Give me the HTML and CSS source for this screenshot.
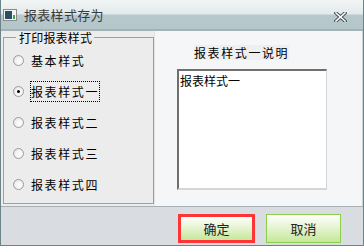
FILE: index.html
```html
<!DOCTYPE html>
<html>
<head>
    <meta charset="utf-8">
    <title>报表样式存为</title>
    <link rel="stylesheet" href="styles.css">
</head>
<body>
    <div class="window">
        <div class="titlebar">
            <svg class="appicon" width="14" height="12" viewBox="0 0 14 12">
                <rect x="0.5" y="0.5" width="13" height="11" fill="#f4f4f4" stroke="#8a8a8a"/>
                <rect x="2" y="2" width="7" height="8" fill="#2c4f63"/>
                <rect x="10" y="6" width="2" height="4" fill="#3aa35a"/>
            </svg>
            <span class="title">报表样式存为</span>
            <svg class="close" width="13" height="10" viewBox="0 0 13 10">
                <path d="M2 1 L11 9 M11 1 L2 9" stroke="#3d4a4e" stroke-width="3.4" stroke-linecap="square"/>
                <path d="M2 1 L11 9 M11 1 L2 9" stroke="#ffffff" stroke-width="1.6" stroke-linecap="square"/>
            </svg>
        </div>
        <div class="main">
            <div class="left">
                <fieldset class="group">
                    <legend>打印报表样式</legend>
                    <div class="opt"><span class="radio"></span><span class="label">基本样式</span></div>
                    <div class="opt"><span class="radio on"></span><span class="label focus">报表样式一</span></div>
                    <div class="opt"><span class="radio"></span><span class="label">报表样式二</span></div>
                    <div class="opt"><span class="radio"></span><span class="label">报表样式三</span></div>
                    <div class="opt"><span class="radio"></span><span class="label">报表样式四</span></div>
                </fieldset>
            </div>
            <div class="right">
                <div class="desc-title">报表样式一说明</div>
                <div class="desc-box">报表样式一</div>
            </div>
        </div>
        <div class="footer">
            <div class="btn hl">确定</div>
            <div class="btn">取消</div>
        </div>
    </div>
</body>
</html>
```

FILE: styles.css
```css
body {
    margin: 0;
    padding: 0;
    font-family: "Noto Sans CJK SC", "DejaVu Sans", sans-serif;
    font-size: 12px;
    color: #000;
}

.window {
    display: flex;
    flex-direction: column;
    width: 364px;
    height: 246px;
    box-sizing: border-box;
    border-left: 1px solid #6c8388;
    border-right: 1px solid #6c8388;
    border-bottom: 1px solid #6c8388;
    background-color: #d9dde1;
}

.titlebar {
    display: flex;
    align-items: center;
    height: 29px;
    flex-shrink: 0;
    padding: 0 0 0 2px;
    border-bottom: 2px solid #a4b2b5;
    background: linear-gradient(#f3f6f6 0, #e2e9ea 14px, #b7c8cc 15px, #b5c6ca 29px);
}

.appicon {
    margin-top: 1px;
}

.title {
    margin-left: 7px;
    font-size: 13px;
    color: #3a3a3a;
    letter-spacing: 0.3px;
}

.close {
    margin-left: auto;
    margin-right: 16px;
    margin-top: 5px;
}

.main {
    display: flex;
    height: 175px;
    flex-shrink: 0;
    border-bottom: 1px solid #a9b0b5;
}

.left {
    width: 153px;
    padding: 0 0 2px 2px;
    box-sizing: border-box;
    background-color: #ececec;
    display: flex;
}

.group {
    flex: 1;
    margin: 0;
    padding: 1px 0 0 9px;
    border: 1px solid #a0a0a0;
    border-right-color: #9a9a9a;
}

.group legend {
    padding: 0 2px 0 3px;
    margin-left: 3px;
    font-size: 12px;
    line-height: 13px;
    letter-spacing: 0.2px;
}

.opt {
    display: flex;
    align-items: center;
    height: 31px;
}

.radio {
    width: 9px;
    height: 9px;
    border-radius: 50%;
    border: 1px solid #9c9c9c;
    background: radial-gradient(circle at 60% 60%, #ffffff 0, #f2f2f2 50%, #d6d6d6 100%);
    position: relative;
}

.radio.on::after {
    content: "";
    position: absolute;
    left: 3px;
    top: 3px;
    width: 3px;
    height: 3px;
    background-color: #000;
    border-radius: 50%;
}

.label {
    margin-left: 6px;
    padding: 1px 0;
    letter-spacing: 1.6px;
    border: 1px solid transparent;
}

.label.focus {
    border: 1px dotted #000;
}

.right {
    flex: 1;
    background-color: #f5f6f8;
    border-left: 1px solid #e4e4e4;
    border-right: 1px solid #cfd3d6;
}

.desc-title {
    display: inline-block;
    margin: 14px 0 0 39px;
    background-color: #efefef;
    letter-spacing: 1.6px;
    line-height: 15px;
}

.desc-box {
    width: 150px;
    height: 121px;
    margin: 8px 0 0 22px;
    background-color: #fff;
    border-top: 2px solid #6f6f6f;
    border-left: 2px solid #6f6f6f;
    border-right: 1px solid #d6d6d6;
    border-bottom: 2px solid #d6d6d6;
    box-sizing: border-box;
    padding: 2px 0 0 1px;
    line-height: 16px;
}

.footer {
    display: flex;
    gap: 11px;
    padding: 7px 0 0 177px;
    flex: 1;
}

.btn {
    display: flex;
    align-items: center;
    justify-content: center;
    width: 75px;
    height: 29px;
    box-sizing: border-box;
    border: 1px solid #8ccf4b;
    background: linear-gradient(#ffffff, #c6e79b);
    font-size: 13px;
    color: #222;
}

.btn.hl {
    width: 77px;
    border: 3px solid #ff3434;
}
```
